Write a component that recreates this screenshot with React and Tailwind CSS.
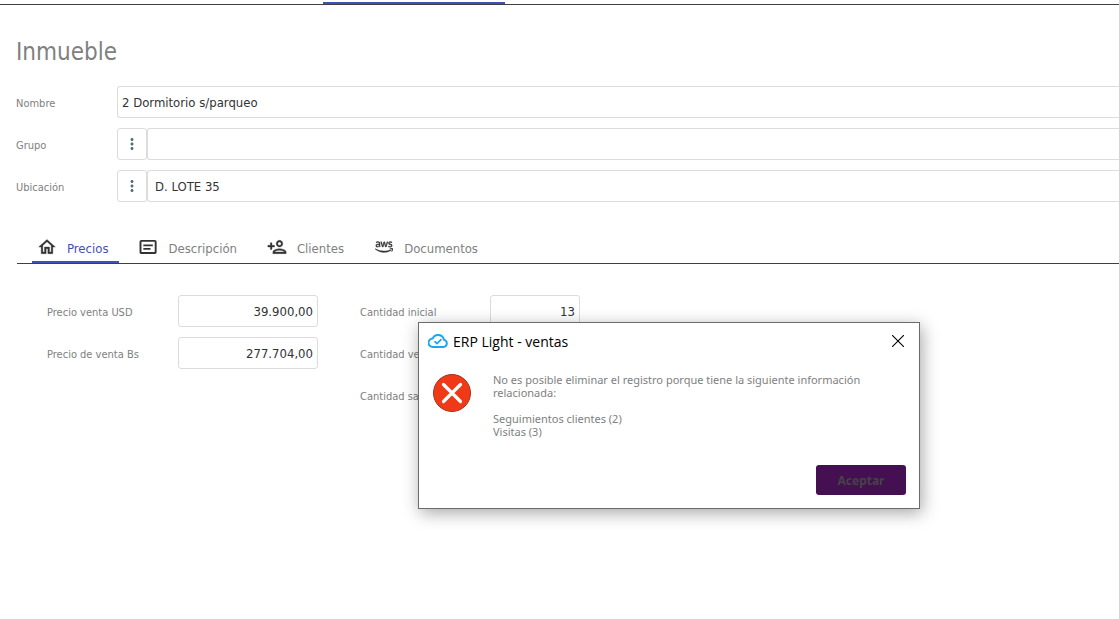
import { useState } from 'react';
import { FaAws } from 'react-icons/fa';
import { MdMoreVert } from 'react-icons/md';

const inputClass =
  'h-8 min-w-0 rounded-[3px] border border-[#dcdcdc] bg-white pt-px text-[13px] text-[#333] focus:border-[#3f51b5] focus:outline-none';

function HomeIcon() {
  return (
    <svg viewBox="0 0 24 24" className="h-5 w-5 shrink-0" fill="currentColor" stroke="currentColor" strokeWidth="0.4">
      <path d="M12 5.69l5 4.5V18h-2v-6H9v6H7v-7.81l5-4.5M12 3L2 12h3v8h6v-6h2v6h6v-8h3L12 3z" />
    </svg>
  );
}

function PersonAddIcon() {
  return (
    <svg viewBox="0 0 24 24" className="h-5 w-5 shrink-0" fill="currentColor" stroke="currentColor" strokeWidth="0.4">
      <path d="M15 12c2.21 0 4-1.79 4-4s-1.79-4-4-4-4 1.79-4 4 1.79 4 4 4zm0-6c1.1 0 2 .9 2 2s-.9 2-2 2-2-.9-2-2 .9-2 2-2zm0 8c-2.67 0-8 1.34-8 4v2h16v-2c0-2.66-5.33-4-8-4zm-6 4c.22-.72 3.31-2 6-2 2.7 0 5.8 1.29 6 2H9zm-3-3v-3h3v-2H6V7H4v3H1v2h3v3z" />
    </svg>
  );
}

function CardIcon() {
  return (
    <svg viewBox="0 0 24 24" className="h-5 w-5 shrink-0" fill="none" stroke="currentColor" strokeWidth="2.3">
      <rect x="3" y="4.6" width="18.2" height="14.6" rx="1" />
      <path d="M6.4 10h11.4M6.4 14.2h8.6" strokeWidth="2" />
    </svg>
  );
}

function CloudIcon() {
  return (
    <svg viewBox="0 0 20 16" className="h-4 w-5 shrink-0" fill="none" stroke="#1aa7ee" strokeWidth="2" strokeLinecap="round" strokeLinejoin="round">
      <path d="M4.8 14h10.6a3.6 3.6 0 0 0 .6-7.1A6 6 0 0 0 4.6 5.6 4.2 4.2 0 0 0 4.8 14z" />
      <path d="M7 8.7l2 2 4-4" strokeWidth="1.7" />
    </svg>
  );
}

function ErrorIcon() {
  return (
    <svg viewBox="0 0 40 40" className="h-10 w-10 shrink-0">
      <circle cx="20" cy="20" r="18.5" fill="#f03a17" stroke="#a8301a" strokeWidth="1" />
      <path d="M11.5 11.5l17 17M28.5 11.5l-17 17" stroke="#fff" strokeWidth="3.2" strokeLinecap="round" />
    </svg>
  );
}

const tabs = [
  { id: 'precios', label: 'Precios', icon: <HomeIcon /> },
  { id: 'descripcion', label: 'Descripción', icon: <CardIcon /> },
  { id: 'clientes', label: 'Clientes', icon: <PersonAddIcon /> },
  { id: 'documentos', label: 'Documentos', icon: <FaAws className="mx-px h-[18px] w-[18px] shrink-0 stroke-current stroke-[12]" /> },
];

function LookupField({ id, label, defaultValue }) {
  return (
    <div className="flex items-center">
      <label htmlFor={id} className="w-[101px] shrink-0 pt-1 text-[11px] text-[#808080]">{label}</label>
      <button type="button" aria-label={`Buscar ${label}`} className="flex h-8 w-[30px] shrink-0 items-center justify-center rounded-[3px] border border-[#dcdcdc] bg-white text-[#546e7a]">
        <MdMoreVert className="h-[18px] w-[18px]" />
      </button>
      <input id={id} type="text" defaultValue={defaultValue} className={`${inputClass} flex-1 rounded-r-none border-r-0 px-[7px]`} />
    </div>
  );
}

function NumberField({ id, label, defaultValue, labelClass, widthClass }) {
  return (
    <div className="flex items-center">
      <label htmlFor={id} className={`${labelClass} shrink-0 pt-1 text-[11px] text-[#808080]`}>{label}</label>
      <input id={id} type="text" defaultValue={defaultValue} className={`${inputClass} ${widthClass} px-1 text-right`} />
    </div>
  );
}

function ErrorDialog({ onClose }) {
  return (
    <div role="alertdialog" aria-labelledby="dialog-title" className="absolute left-[418px] top-[322px] w-[502px] border border-[#6b6b6b] bg-white font-['Noto_Sans',sans-serif] shadow-[2px_4px_16px_rgba(0,0,0,0.35)]">
      <div className="flex h-9 items-center pl-[9px] pr-[13px]">
        <CloudIcon />
        <h2 id="dialog-title" className="ml-[5px] flex-1 font-['Open_Sans',sans-serif] text-[14px] text-black">ERP Light - ventas</h2>
        <button type="button" aria-label="Cerrar" onClick={onClose} className="flex h-4 w-4 items-center justify-center">
          <svg viewBox="0 0 12 12" className="h-3 w-3" stroke="#000" strokeWidth="1.1">
            <path d="M0 0l12 12M12 0L0 12" />
          </svg>
        </button>
      </div>
      <div className="flex px-[13px] pt-[14px]">
        <ErrorIcon />
        <div className="ml-[21px] w-[380px] text-[11px] leading-[13px] text-[#808080]">
          <p>No es posible eliminar el registro porque tiene la siguiente información relacionada:</p>
          <ul className="mt-[13px]">
            <li>Seguimientos clientes (2)</li>
            <li>Visitas (3)</li>
          </ul>
        </div>
      </div>
      <div className="flex justify-end px-[13px] pb-[13px] pt-[27px]">
        <button type="button" onClick={onClose} className="h-[30px] w-[90px] rounded-[3px] bg-[#451052] pt-px text-[12px] font-bold text-[#444]">Aceptar</button>
      </div>
    </div>
  );
}

export default function App() {
  const [activeTab, setActiveTab] = useState('precios');
  const [showDialog, setShowDialog] = useState(true);

  return (
    <div className="relative min-h-screen overflow-hidden bg-white font-['DejaVu_Sans_Condensed','DejaVu_Sans',sans-serif]">
      <header className="flex border-b border-[#404040] pl-[323px] pt-0.5">
        <div className="h-0.5 w-[182px] bg-[#3f51b5]" />
      </header>

      <main className="pl-4 pt-[29px]">
        <h1 className="text-[24px] leading-9 text-[#808080]">Inmueble</h1>

        <form className="mt-4 space-y-[10px]" onSubmit={(e) => e.preventDefault()}>
          <div className="flex items-center">
            <label htmlFor="nombre" className="w-[101px] shrink-0 pt-1 text-[11px] text-[#808080]">Nombre</label>
            <input id="nombre" type="text" defaultValue="2 Dormitorio s/parqueo" className={`${inputClass} flex-1 rounded-r-none border-r-0 px-1`} />
          </div>
          <LookupField id="grupo" label="Grupo" defaultValue="" />
          <LookupField id="ubicacion" label="Ubicación" defaultValue="D. LOTE 35" />
        </form>

        <div role="tablist" className="ml-px mt-[30px] flex gap-[14px] border-b border-[#404040] pl-[15px]">
          {tabs.map((tab) => (
            <button
              key={tab.id}
              type="button"
              role="tab"
              aria-selected={activeTab === tab.id}
              onClick={() => setActiveTab(tab.id)}
              className={`flex h-[31px] items-center gap-[10px] border-b-2 pl-[5px] pr-[11px] text-[13px] ${
                activeTab === tab.id ? 'border-[#3f51b5] text-[#3f51b5]' : 'border-transparent text-[#808080]'
              }`}
            >
              <span className="text-[#333]">{tab.icon}</span>
              <span className="pt-1">{tab.label}</span>
            </button>
          ))}
        </div>

        {activeTab === 'precios' && (
          <div className="flex gap-[42px] pl-[31px] pt-[31px]">
            <div className="space-y-[10px]">
              <NumberField id="precio-usd" label="Precio venta USD" defaultValue="39.900,00" labelClass="w-[131px]" widthClass="w-[140px]" />
              <NumberField id="precio-bs" label="Precio de venta Bs" defaultValue="277.704,00" labelClass="w-[131px]" widthClass="w-[140px]" />
            </div>
            <div className="space-y-[10px]">
              <NumberField id="cant-inicial" label="Cantidad inicial" defaultValue="13" labelClass="w-[130px]" widthClass="w-[90px]" />
              <NumberField id="cant-vendida" label="Cantidad vendida" defaultValue="" labelClass="w-[130px]" widthClass="w-[90px]" />
              <NumberField id="cant-saldo" label="Cantidad saldo" defaultValue="" labelClass="w-[130px]" widthClass="w-[90px]" />
            </div>
          </div>
        )}
      </main>

      {showDialog && <ErrorDialog onClose={() => setShowDialog(false)} />}
    </div>
  );
}
